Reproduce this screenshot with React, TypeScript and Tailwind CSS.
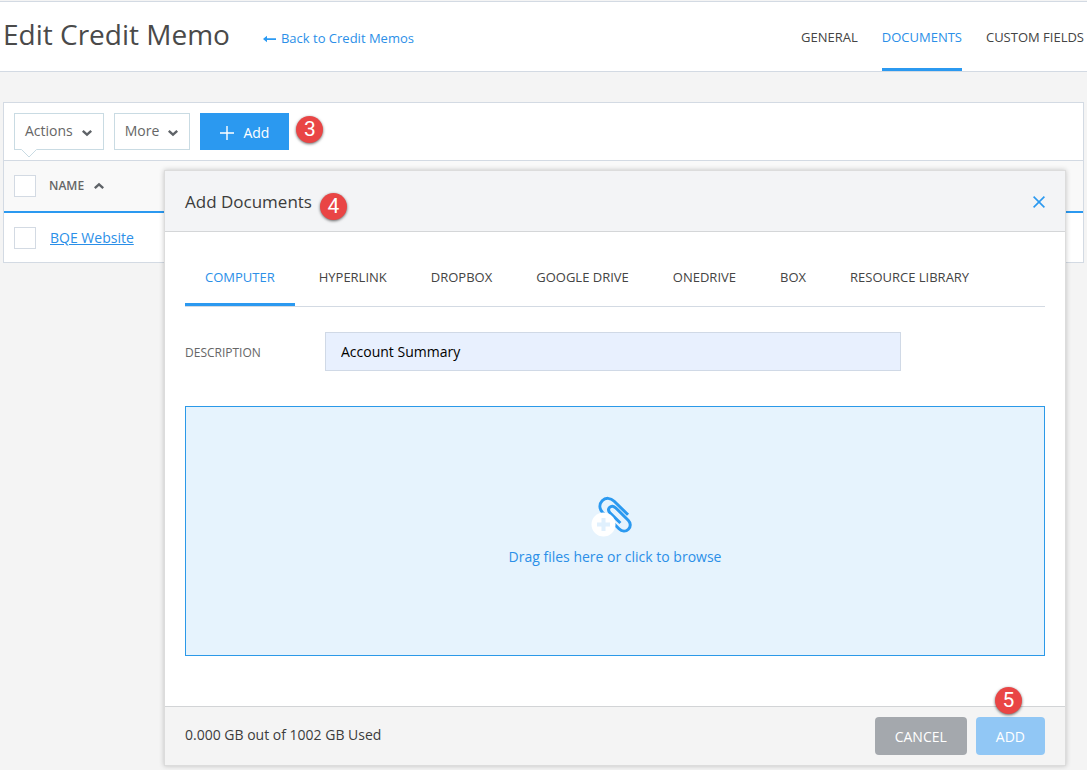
import React from "react";

const pageTabs = ["GENERAL", "DOCUMENTS", "CUSTOM FIELDS"];

const sourceTabs = [
  "COMPUTER",
  "HYPERLINK",
  "DROPBOX",
  "GOOGLE DRIVE",
  "ONEDRIVE",
  "BOX",
  "RESOURCE LIBRARY",
];

function StepBadge({ step }: { step: number }) {
  return (
    <span className="flex size-[27px] shrink-0 items-center justify-center rounded-full bg-[#e94545] font-[Roboto,sans-serif] text-[21px] leading-none text-white shadow-[0_1px_3px_rgba(0,0,0,0.6)]">
      {step}
    </span>
  );
}

function Chevron({ up = false }: { up?: boolean }) {
  return (
    <svg width="12" height="8" viewBox="0 0 12 8" fill="none" aria-hidden="true">
      <path
        d={up ? "M1.8 6.2 6 2.4l4.2 3.8" : "M1.8 1.8 6 5.6l4.2-3.8"}
        stroke="#5f6368"
        strokeWidth="2.4"
      />
    </svg>
  );
}

function BackArrow() {
  return (
    <svg width="13" height="8" viewBox="0 0 13 8" aria-hidden="true">
      <path d="M0 4 4 .8V3.2H13V4.9H4V7.2z" fill="#2b9af3" />
    </svg>
  );
}

function Paperclip() {
  return (
    <svg width="50" height="42" viewBox="0 0 50 42" fill="none" aria-hidden="true">
      <g stroke="#2b99f0" strokeWidth="3">
        <path d="M38 19.8 24.2 6.2C20.6 2.6 15.4 2.4 12.2 5.8 9 9.2 9.3 13.8 12.4 17.2L29 33.8C31.9 36.7 35.8 36.9 38.4 34.3 41 31.7 40.8 27.8 38.2 25.2L25.8 13C23.6 10.8 21.4 10.6 19.7 12.3 18 14 18.3 16.2 20.2 18.2L30.4 28" />
      </g>
      <circle cx="13.5" cy="29.5" r="12" fill="#ffffff" />
      <path d="M13.500 23v13M7 29.5h13" stroke="#e0f0fd" strokeWidth="4" />
    </svg>
  );
}

function AddDocumentsDialog() {
  return (
    <section
      role="dialog"
      aria-labelledby="dialog-title"
      className="absolute top-[170px] right-[21px] left-[164px] border border-[#dcdcdc] bg-white shadow-[0_0_5px_rgba(0,0,0,0.22)]"
    >
      <header className="flex h-[61px] items-center border-b border-[#d4d6d8] bg-[#f3f4f6] px-5 pt-0.5">
        <h2 id="dialog-title" className="text-[17px] text-[#3c3c3c]">
          Add Documents
        </h2>
        <div className="mt-2 ml-2">
          <StepBadge step={4} />
        </div>
        <button type="button" aria-label="Close" className="ml-auto">
          <svg width="12" height="12" viewBox="0 0 12 12" fill="none" aria-hidden="true">
            <path d="M.6.6l10.8 10.8M11.4.6.6 11.4" stroke="#2b99f0" strokeWidth="1.6" />
          </svg>
        </button>
      </header>

      <div className="px-5 pb-[50px]">
        <div role="tablist" className="flex gap-1 border-b border-[#d3dae3] pt-[15px]">
          {sourceTabs.map((name, i) => (
            <button
              key={name}
              type="button"
              role="tab"
              aria-selected={i === 0}
              className={
                i === 0
                  ? "h-[59px] border-b-3 border-[#2b99f0] px-5 pt-1.5 text-[13px] text-[#2b8fe8]"
                  : "h-[59px] border-b-3 border-transparent px-5 pt-1.5 text-[13px] text-[#444444]"
              }
            >
              {name}
            </button>
          ))}
        </div>

        <div className="mt-[25px] flex items-center pr-36">
          <label htmlFor="description" className="w-35 pt-0.5 text-xs text-[#666666]">
            DESCRIPTION
          </label>
          <input
            id="description"
            type="text"
            defaultValue="Account Summary"
            className="h-[39px] min-w-0 flex-1 border border-[#d0d9e6] bg-[#e8f0fe] px-[15px] text-sm text-black"
          />
        </div>

        <button
          type="button"
          className="mt-[35px] flex h-[250px] w-full flex-col items-center justify-center gap-[10px] border border-[#2b99e8] bg-[#e6f3fd] text-sm text-[#2b8fe8]"
        >
          <Paperclip />
          Drag files here or click to browse
        </button>
      </div>

      <footer className="relative flex items-center gap-[9px] border-t border-[#d2d4d6] bg-[#f4f4f4] px-5 py-[10px]">
        <p className="mr-auto pb-0.5 text-sm text-[#3c3c3c]">0.000 GB out of 1002 GB Used</p>
        <button type="button" className="h-[38px] rounded bg-[#a4a8ad] px-5 pt-0.5 text-sm text-white">
          CANCEL
        </button>
        <button type="button" className="h-[38px] rounded bg-[#91c7f5] px-5 pt-0.5 text-sm text-white">
          ADD
        </button>
        <div className="absolute -top-[20px] right-[43px]">
          <StepBadge step={5} />
        </div>
      </footer>
    </section>
  );
}

export default function App() {
  return (
    <div className="relative min-h-screen bg-[#f4f4f4] pt-px font-['Open_Sans',sans-serif] text-[#444444]">
      <header className="flex h-[71px] border-y border-[#d3dae3] bg-white px-[3px]">
        <h1 className="mt-[11px] text-[28px] leading-[42px] text-[#4a4a4a]">Edit Credit Memo</h1>
        <a
          href="#credit-memos"
          className="mt-[27px] ml-[33px] flex h-5 items-center gap-[5px] text-[13px] text-[#2b8fe8]"
        >
          <BackArrow />
          Back to Credit Memos
        </a>
        <nav className="ml-auto flex gap-6 text-[13px]">
          {pageTabs.map((name) => (
            <a
              key={name}
              href="#"
              className={
                name === "DOCUMENTS"
                  ? "flex items-center border-b-3 border-[#2b99f0] pt-1.5 text-[#2b8fe8]"
                  : "flex items-center border-b-3 border-transparent pt-1.5"
              }
            >
              {name}
            </a>
          ))}
        </nav>
      </header>

      <main className="mx-[3px] mt-[30px] border border-[#d3dae3] bg-white">
        <div className="flex gap-[10px] border-b border-[#d3dae3] p-[10px]">
          <button
            type="button"
            className="relative flex h-[37px] items-center gap-2 border border-[#c9dbe3] px-[10px] pb-0.5 text-sm text-[#666666]"
          >
            Actions
            <span className="pt-1">
              <Chevron />
            </span>
            <svg
              className="absolute top-[35px] left-[6px]"
              width="16"
              height="9"
              viewBox="0 0 16 9"
              aria-hidden="true"
            >
              <path d="M0 0h16L8 8z" fill="#fff" />
              <path d="M.5.5 8 8 15.500.5" fill="none" stroke="#c9dbe3" />
            </svg>
          </button>
          <button
            type="button"
            className="flex h-[37px] items-center gap-2 border border-[#c9dbe3] px-[10px] pb-0.5 text-sm text-[#666666]"
          >
            More
            <span className="pt-1">
              <Chevron />
            </span>
          </button>
          <button
            type="button"
            className="flex h-[37px] items-center gap-[9px] bg-[#2b99f0] px-5 pt-0.5 text-sm text-white"
          >
            <svg width="14" height="14" viewBox="0 0 14 14" aria-hidden="true">
              <path d="M7 0v14M0 7h14" stroke="#fff" strokeWidth="1.4" />
            </svg>
            Add
          </button>
          <div className="-ml-[3px] flex items-center pb-1">
            <StepBadge step={3} />
          </div>
        </div>

        <table className="w-full border-collapse text-left">
          <thead>
            <tr className="h-[51px] border-b-2 border-[#2b99f0] bg-[#f9f9f9]">
              <th className="w-[45px] pl-[10px]">
                <input
                  type="checkbox"
                  aria-label="Select all documents"
                  className="block size-[22px] appearance-none border border-[#d3dae3] bg-white"
                />
              </th>
              <th className="text-xs font-semibold text-[#666666]">
                <span className="flex items-center gap-[9px]">
                  NAME
                  <Chevron up />
                </span>
              </th>
            </tr>
          </thead>
          <tbody>
            <tr className="h-[50px]">
              <td className="pl-[10px]">
                <input
                  type="checkbox"
                  aria-label="Select BQE Website"
                  className="block size-[22px] appearance-none border border-[#d3dae3] bg-white"
                />
              </td>
              <td className="pl-px text-sm">
                <a href="#bqe-website" className="text-[#2b8fe8] underline">
                  BQE Website
                </a>
              </td>
            </tr>
          </tbody>
        </table>
      </main>

      <AddDocumentsDialog />
    </div>
  );
}
